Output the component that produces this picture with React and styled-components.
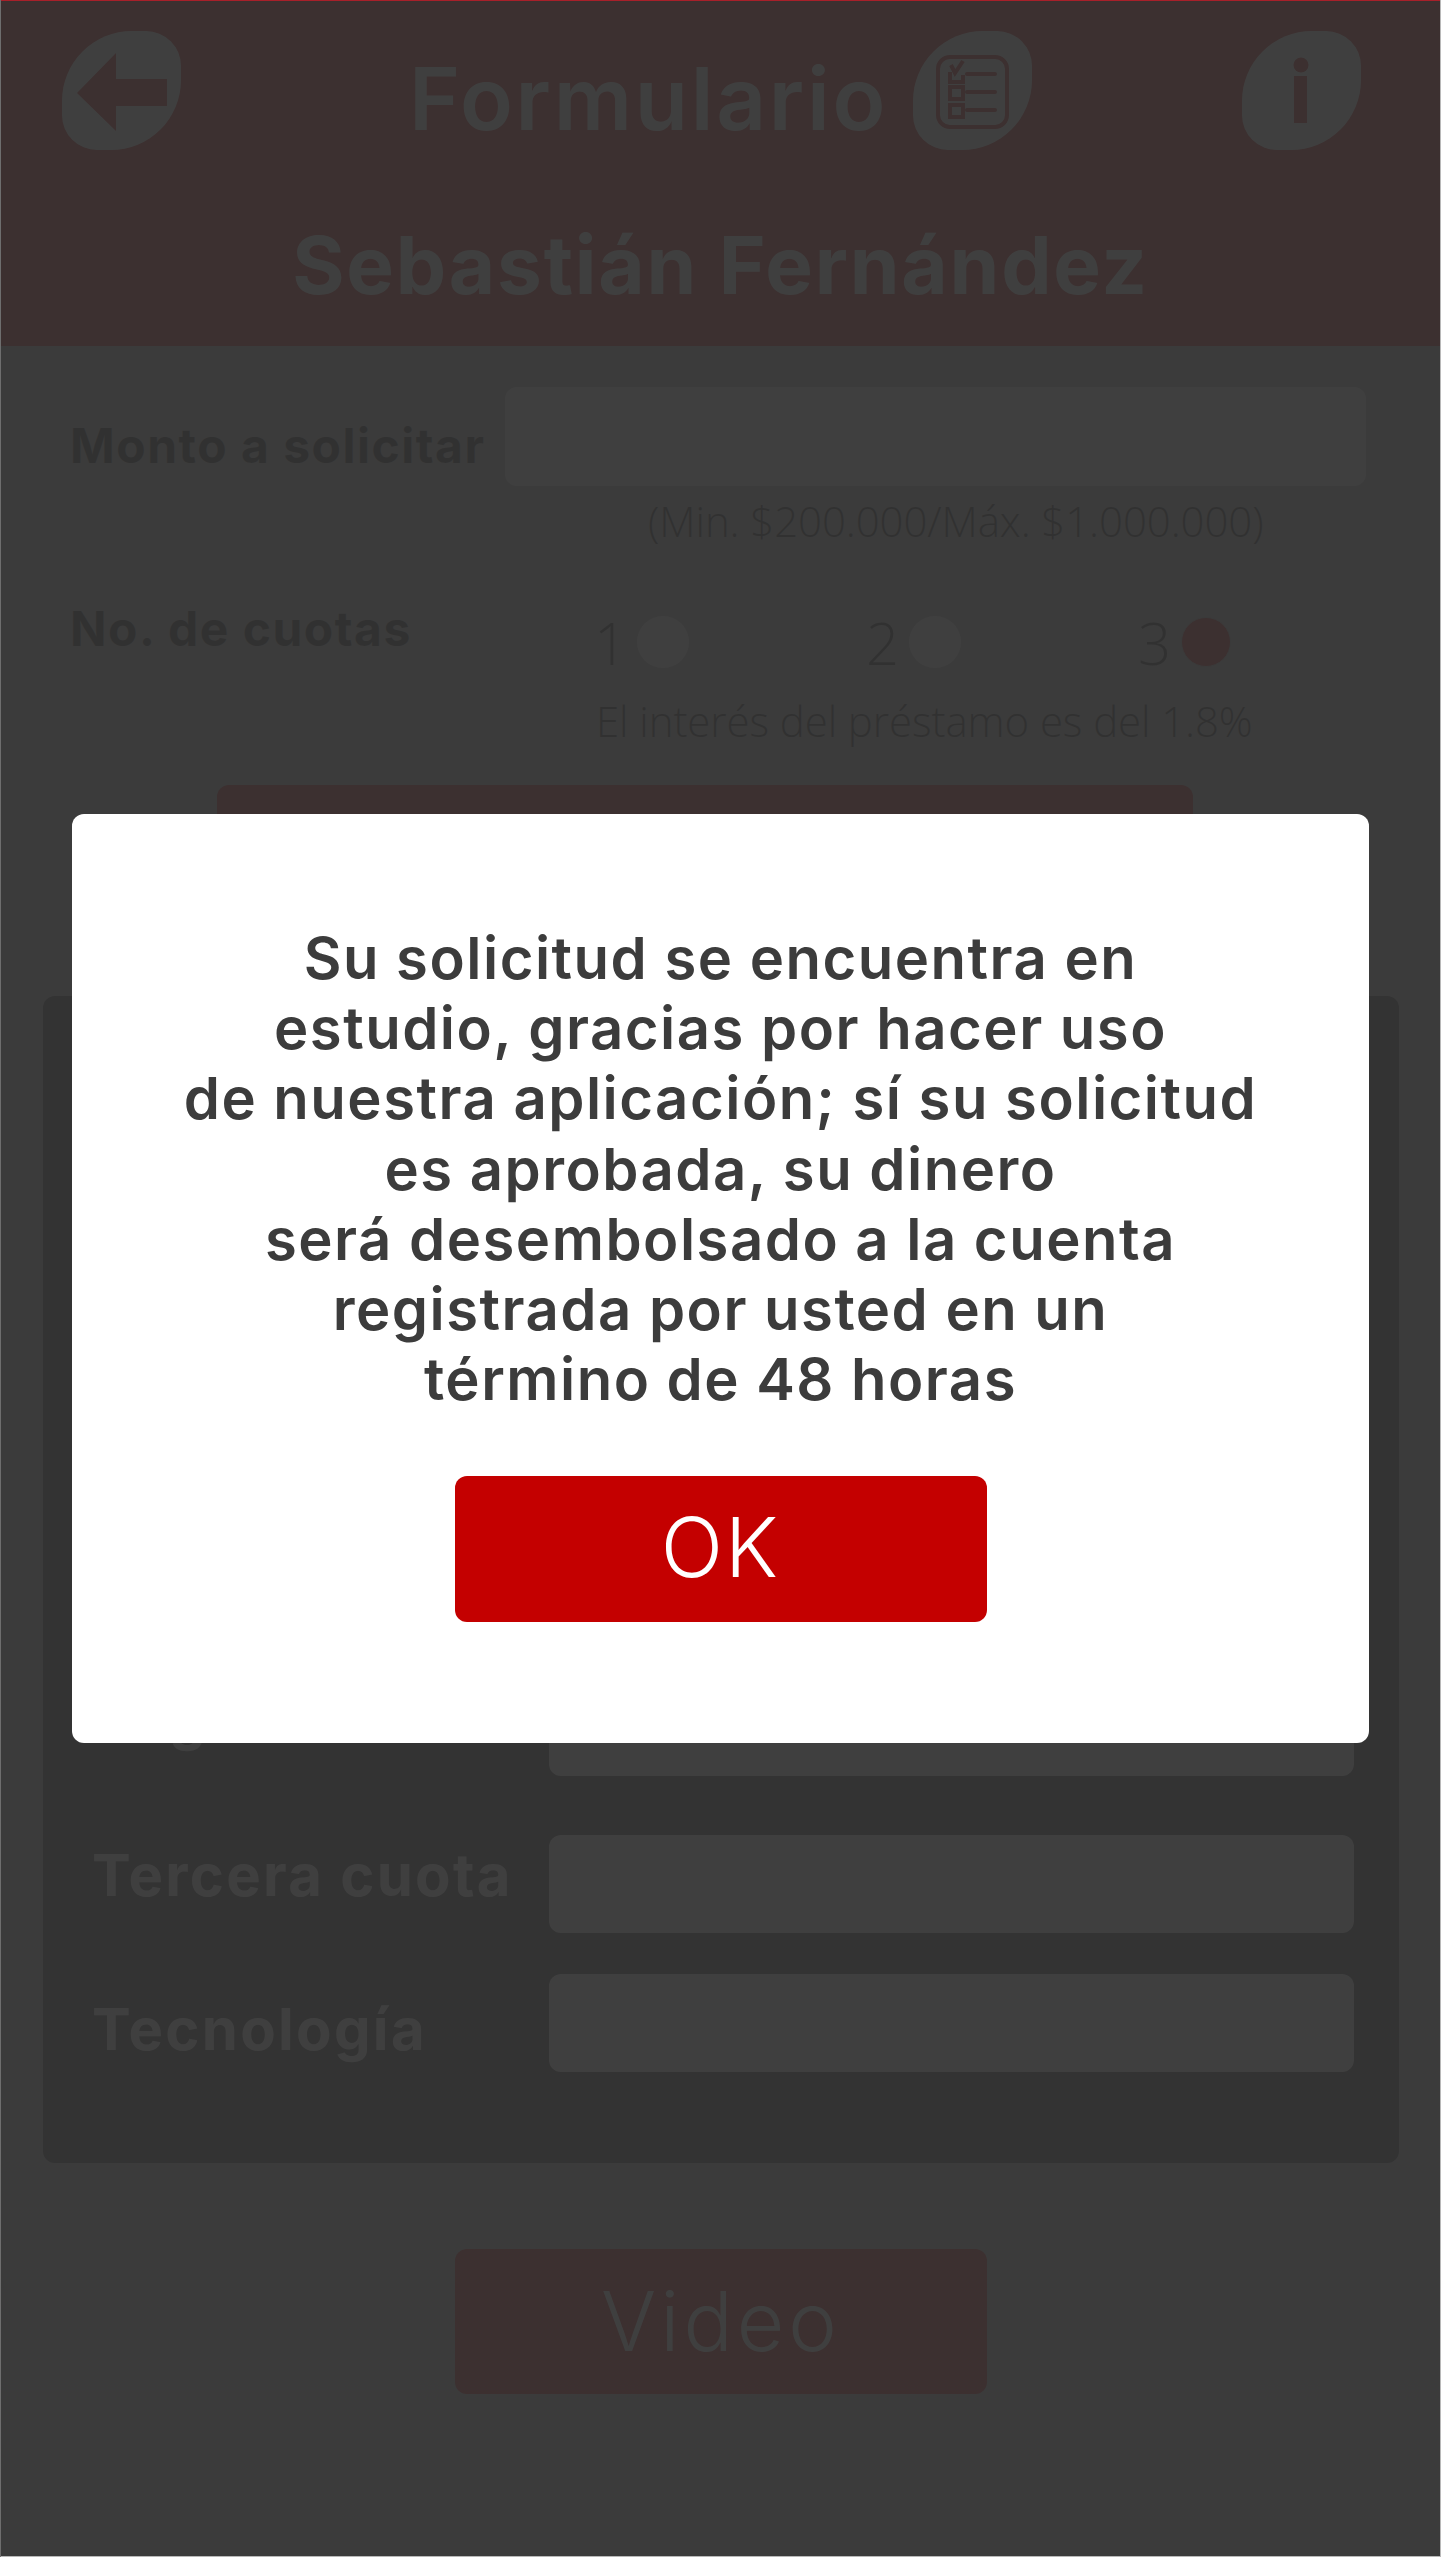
import React from 'react';
import styled, { createGlobalStyle } from 'styled-components';

const GlobalStyle = createGlobalStyle`
  html, body {
    margin: 0;
    padding: 0;
    background: #b8b8b8;
  }
  * {
    box-sizing: border-box;
  }
`;

const Page = styled.div`
  position: relative;
  width: 1441px;
  height: 2557px;
  overflow: hidden;
  display: flex;
  flex-direction: column;
  background: #b8b8b8;
  border-left: 1px solid #6e6e6e;
  font-family: "Open Sans", sans-serif;
`;

const Header = styled.header`
  height: 346px;
  margin: 0 1px 0 -1px;
  padding: 30px 79px 0 61px;
  background: #c40000;
  border-top: 1px solid #a8202a;
  border-left: 1px solid #8a2028;
  color: #fff;
  font-family: Inter, sans-serif;
`;

const TopRow = styled.div`
  display: flex;
  align-items: flex-start;
  justify-content: space-between;
`;

const TitleGroup = styled.div`
  display: flex;
  align-items: flex-start;
  gap: 25px;
  margin-left: 18px;
`;

const Title = styled.h1`
  margin: 0;
  padding-top: 8px;
  font-size: 87px;
  line-height: 119px;
  font-weight: 600;
  letter-spacing: 2.7px;
`;

const UserName = styled.h2`
  margin: 57px 0 0 -62px;
  width: 1441px;
  text-align: center;
  font-size: 80px;
  line-height: 100px;
  font-weight: 700;
  letter-spacing: 1.8px;
`;

const Blob = styled.div`
  flex: none;
  width: 119px;
  height: 119px;
  background: #fff;
  border-radius: 70px 35px 70px 35px;
`;

const BlobIcon = styled.svg`
  display: block;
  width: 119px;
  height: 119px;
  fill: #c40000;
`;

const LoanForm = styled.section`
  padding: 41px 75px 0 71px;
`;

const AmountRow = styled.div`
  display: flex;
  height: 99px;
  gap: 20px;
`;

const FieldLabel = styled.label`
  flex: none;
  width: 413px;
  margin-top: ${({ $top }) => $top}px;
  margin-left: -2px;
  margin-right: 2px;
  font-family: Inter, sans-serif;
  font-size: 48px;
  line-height: 100px;
  font-weight: 700;
  letter-spacing: 1.5px;
  white-space: nowrap;
  color: #1a1a1a;
`;

const AmountInput = styled.div`
  flex: 1;
  height: 99px;
  background: #fff;
  border-radius: 12px;
`;

const Hint = styled.p`
  margin: ${({ $top }) => $top}px 0 0 ${({ $left }) => $left}px;
  font-size: 42px;
  line-height: 48px;
  font-weight: 300;
  letter-spacing: -0.1px;
  white-space: nowrap;
  color: #1a1a1a;
`;

const InstallmentRow = styled.div`
  display: flex;
  height: 100px;
  margin-top: 47px;
`;

const RadioGroup = styled.div`
  display: flex;
  margin-left: 109px;
`;

const RadioItem = styled.div`
  display: flex;
  align-items: center;
  gap: 10px;
  width: 272px;
  font-size: 58px;
  font-weight: 300;
  color: #1a1a1a;
`;

const Radio = styled.span`
  width: ${({ $checked }) => ($checked ? 50 : 52)}px;
  height: ${({ $checked }) => ($checked ? 50 : 52)}px;
  border-radius: 50%;
  background: ${({ $checked }) => ($checked ? '#c40000' : '#fff')};
  border: ${({ $checked }) => ($checked ? '1px solid #aaa' : '0')};
`;

const CalcButton = styled.div`
  width: 976px;
  height: 180px;
  margin: 40px 0 0 145px;
  background: #c40000;
  border-radius: 12px;
`;

const ResultPanel = styled.section`
  margin: 31px 0 0 42px;
  width: 1356px;
  height: 1167px;
  padding: 682px 45px 0 49px;
  background: #333;
  border-radius: 12px;
  font-family: Inter, sans-serif;
`;

const ResultRow = styled.div`
  display: flex;
  align-items: flex-start;
  margin-bottom: ${({ $gap }) => $gap}px;
`;

const ResultLabel = styled.span`
  flex: none;
  width: 457px;
  padding-top: ${({ $top }) => $top}px;
  font-size: 58px;
  line-height: 68px;
  font-weight: 700;
  letter-spacing: 2.3px;
  white-space: nowrap;
  color: #fff;
`;

const ResultValue = styled.div`
  width: 805px;
  height: 98px;
  background: #fff;
  border-radius: 12px;
`;

const VideoButton = styled.div`
  align-self: center;
  width: 532px;
  height: 145px;
  margin-top: 86px;
  display: flex;
  align-items: center;
  justify-content: center;
  background: #c40000;
  border-radius: 12px;
  color: #fff;
  font-family: Inter, sans-serif;
  font-size: 82px;
  font-weight: 300;
  letter-spacing: 4px;
`;

const Overlay = styled.div`
  position: absolute;
  inset: 1px 1px 1px 0;
  display: flex;
  align-items: center;
  justify-content: center;
  background: rgba(51, 51, 51, 0.94);
`;

const Dialog = styled.div`
  width: 1297px;
  height: 929px;
  padding-top: 109px;
  display: flex;
  flex-direction: column;
  align-items: center;
  background: #fff;
  border-radius: 12px;
  font-family: Inter, sans-serif;
`;

const Message = styled.p`
  margin: 0;
  text-align: center;
  font-size: 58px;
  line-height: 70.2px;
  font-weight: 600;
  letter-spacing: 1.5px;
  color: #3c3c3c;
`;

const OkButton = styled.button`
  width: 532px;
  height: 146px;
  margin-top: 62px;
  padding: 0 0 4px;
  border: 0;
  background: #c40000;
  border-radius: 12px;
  color: #fff;
  font-family: Inter, sans-serif;
  font-size: 82px;
  font-weight: 300;
  letter-spacing: 2px;
`;

const BackIcon = () => (
  <BlobIcon viewBox="0 0 119 119">
    <polygon points="15,62 54,22 54,48 105,48 105,75 54,75 54,100" />
  </BlobIcon>
);

const FormIcon = () => (
  <BlobIcon viewBox="0 0 119 119">
    <rect x="25" y="26" width="69" height="70" rx="12" fill="none" stroke="#c40000" strokeWidth="4" />
    <polyline points="38,34 42,42 50,30" fill="none" stroke="#c40000" strokeWidth="4" />
    <path d="M37 41v10h13v-7" fill="none" stroke="#c40000" strokeWidth="4" />
    <rect x="37" y="56" width="13" height="12" fill="none" stroke="#c40000" strokeWidth="4" />
    <rect x="37" y="74" width="13" height="12" fill="none" stroke="#c40000" strokeWidth="4" />
    <rect x="52" y="41" width="32" height="4" rx="2" />
    <rect x="52" y="59" width="32" height="4" rx="2" />
    <rect x="52" y="77" width="32" height="4" rx="2" />
  </BlobIcon>
);

const InfoIcon = () => (
  <BlobIcon viewBox="0 0 119 119">
    <circle cx="59" cy="34" r="7.5" />
    <rect x="52" y="45" width="13" height="47" />
  </BlobIcon>
);

const App = () => (
  <Page>
    <GlobalStyle />
    <Header>
      <TopRow>
        <Blob><BackIcon /></Blob>
        <TitleGroup>
          <Title>Formulario</Title>
          <Blob><FormIcon /></Blob>
        </TitleGroup>
        <Blob><InfoIcon /></Blob>
      </TopRow>
      <UserName>Sebastián Fernández</UserName>
    </Header>

    <LoanForm>
      <AmountRow>
        <FieldLabel $top={9}>Monto a solicitar</FieldLabel>
        <AmountInput />
      </AmountRow>
      <Hint $top={11} $left={576}>(Min. $200.000/Máx. $1.000.000)</Hint>
      <InstallmentRow>
        <FieldLabel $top={-13}>No. de cuotas</FieldLabel>
        <RadioGroup>
          <RadioItem>1<Radio /></RadioItem>
          <RadioItem>2<Radio /></RadioItem>
          <RadioItem>3<Radio $checked /></RadioItem>
        </RadioGroup>
      </InstallmentRow>
      <Hint $top={5} $left={524}>El interés del préstamo es del 1.8%</Hint>
      <CalcButton />
    </LoanForm>

    <ResultPanel>
      <ResultRow $gap={59}>
        <ResultLabel $top={6}>Segunda cuota</ResultLabel>
        <ResultValue />
      </ResultRow>
      <ResultRow $gap={41}>
        <ResultLabel $top={6}>Tercera cuota</ResultLabel>
        <ResultValue />
      </ResultRow>
      <ResultRow $gap={0}>
        <ResultLabel $top={21}>Tecnología</ResultLabel>
        <ResultValue />
      </ResultRow>
    </ResultPanel>

    <VideoButton>Video</VideoButton>

    <Overlay>
      <Dialog>
        <Message>
          Su solicitud se encuentra en<br />
          estudio, gracias por hacer uso<br />
          de nuestra aplicación; sí su solicitud<br />
          es aprobada, su dinero<br />
          será desembolsado a la cuenta<br />
          registrada por usted en un<br />
          término de 48 horas
        </Message>
        <OkButton>OK</OkButton>
      </Dialog>
    </Overlay>
  </Page>
);

export default App;
